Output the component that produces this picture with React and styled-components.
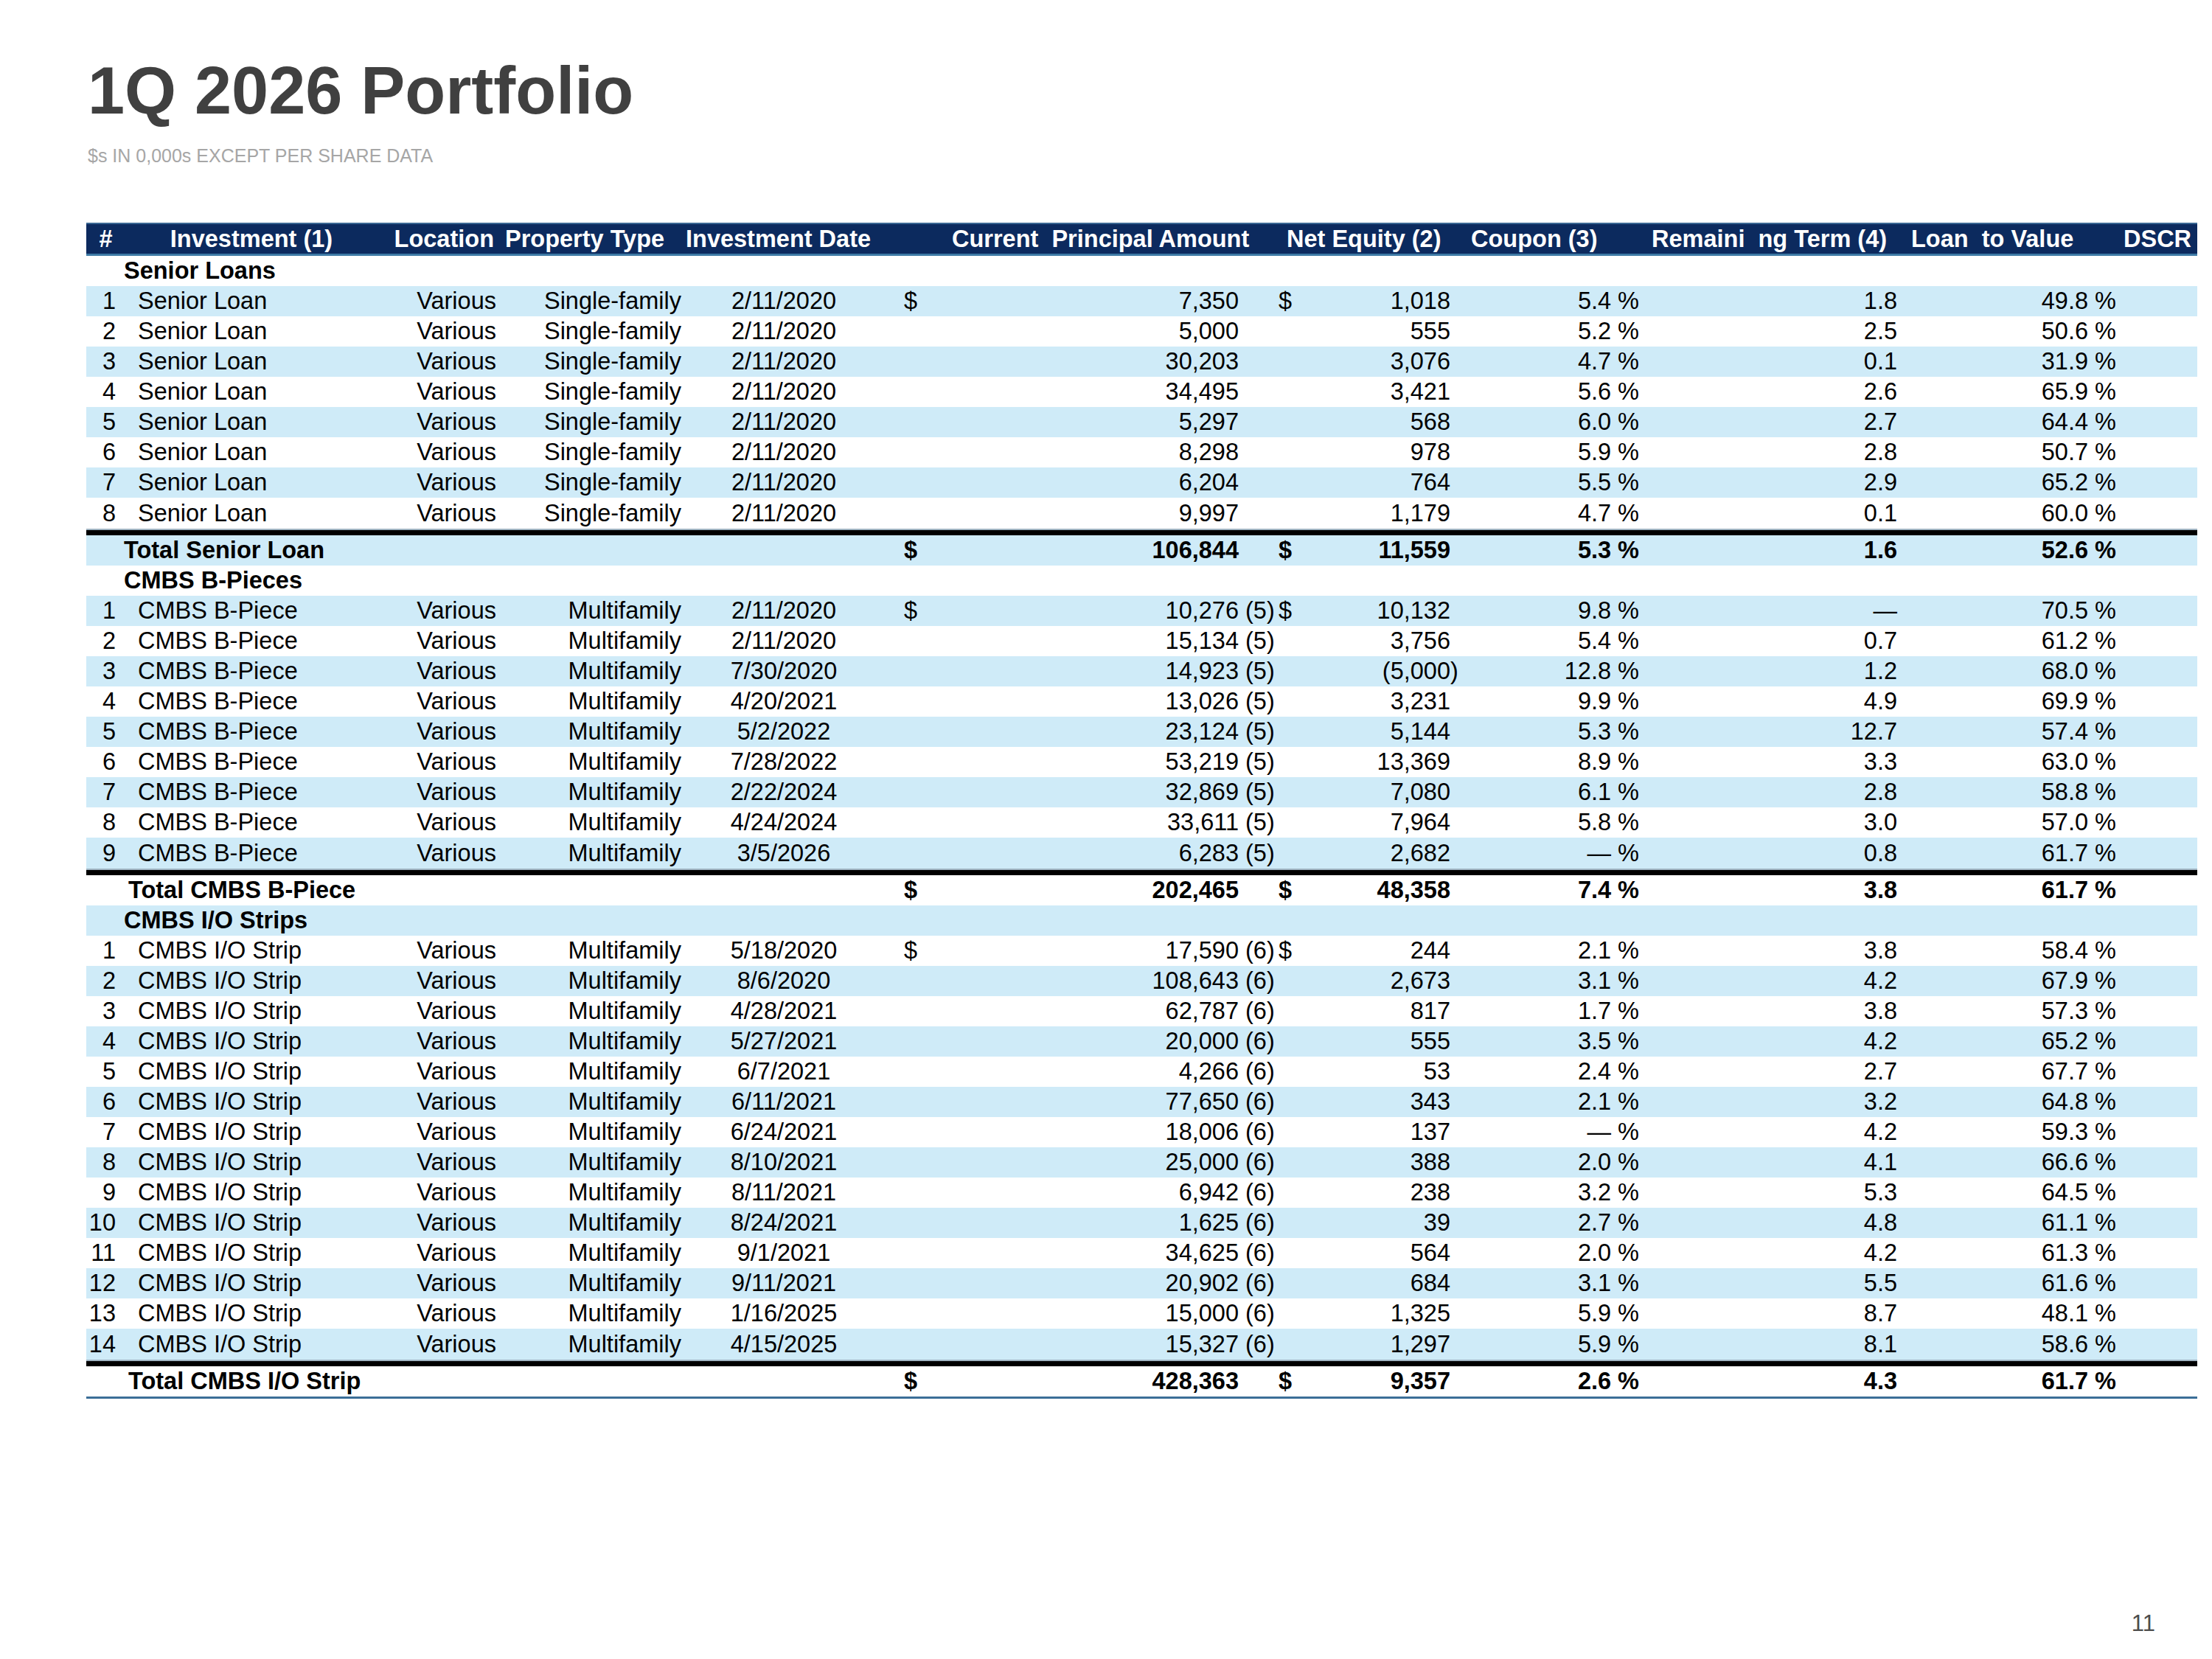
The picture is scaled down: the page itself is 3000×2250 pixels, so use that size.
import React from 'react';
import styled, { createGlobalStyle } from 'styled-components';

const GlobalStyle = createGlobalStyle`
  html, body {
    margin: 0;
    padding: 0;
    background: #fff;
  }
  body {
    font-family: "Liberation Sans", Arial, sans-serif;
    color: #000;
  }
`;

// column grid shared by header and body rows
const COLS = '53px 350px 160px 250px 260px 540px 265px 240px 350px 295px 100px';

const Page = styled.div`
  width: 3000px;
  height: 2250px;
  box-sizing: border-box;
  padding: 78px 20px 0 117px;
  display: flex;
  flex-direction: column;
`;

const Title = styled.h1`
  margin: 0 0 0 2px;
  font-size: 90px;
  line-height: 90px;
  font-weight: 700;
  color: #404040;
`;

const Subtitle = styled.div`
  margin: 31px 0 0 2px;
  font-size: 25px;
  line-height: 25px;
  color: #a6a6a6;
`;

const Table = styled.div`
  margin-top: 78px;
  width: 2863px;
  border-bottom: 3px solid #3b6e97;
`;

const HeadRow = styled.div`
  display: grid;
  grid-template-columns: ${COLS};
  align-items: center;
  height: 45px;
  box-sizing: border-box;
  background: #0c2a5e;
  border-top: 2px solid #3a6894;
  border-bottom: 3px solid #3d7aa5;
  color: #fff;
  font-size: 32.5px;
  font-weight: 700;
`;

const HeadCell = styled.div`
  white-space: pre;
  text-align: ${(p) => p.$align || 'left'};
  padding-left: ${(p) => p.$pl || 0}px;
  padding-right: ${(p) => p.$pr || 0}px;
`;

const Row = styled.div`
  display: grid;
  grid-template-columns: ${COLS};
  align-items: center;
  box-sizing: border-box;
  height: ${(p) => p.$h}px;
  background: ${(p) => (p.$stripe ? '#cfebf8' : '#fff')};
  font-size: 32.5px;
  font-weight: ${(p) => (p.$bold ? 700 : 400)};
  border-top: ${(p) => (p.$rule ? '7px solid #000' : 'none')};
  border-bottom: ${(p) => (p.$last ? '2px solid #9fb3c1' : 'none')};
`;

const Cell = styled.div`
  white-space: pre;
  text-align: ${(p) => p.$align || 'left'};
  padding-left: ${(p) => p.$pl || 0}px;
  padding-right: ${(p) => p.$pr || 0}px;
`;

const Label = styled.div`
  grid-column: 1 / 3;
  padding-left: ${(p) => p.$indent}px;
  font-weight: 700;
  white-space: pre;
`;

const Money = styled.div`
  display: flex;
  justify-content: space-between;
  white-space: pre;
  padding-left: ${(p) => p.$pl}px;
  padding-right: ${(p) => p.$pr}px;
`;

const Note = styled.span`
  display: inline-block;
  width: 50px;
`;

const Paren = styled.span`
  display: inline-block;
  width: 11px;
`;

const PageNum = styled.div`
  margin-top: auto;
  margin-right: 57px;
  margin-bottom: 30px;
  align-self: flex-end;
  font-size: 31px;
  color: #4d4d4d;
`;

const headers = [
  { text: '#', align: 'center' },
  { text: 'Investment (1)', align: 'center', pr: 8 },
  { text: 'Location', align: 'right', pr: 10 },
  { text: 'Property Type', pl: 5 },
  { text: 'Investment Date', align: 'center', pr: 10 },
  { text: 'Current  Principal Amount', pl: 101 },
  { text: 'Net Equity (2)', pl: 15 },
  { text: 'Coupon (3)', pl: 0 },
  { text: 'Remaini  ng Term (4)', pl: 5 },
  { text: 'Loan  to Value', pl: 7 },
  { text: 'DSCR', align: 'right', pr: 11 },
];

const sections = [
  {
    label: 'Senior Loans',
    name: 'Senior Loan',
    type: 'Single-family',
    note: '',
    totalLabel: 'Total Senior Loan',
    totalIndent: 51,
    rows: [
      ['2/11/2020', '7,350', '1,018', '5.4', '1.8', '49.8'],
      ['2/11/2020', '5,000', '555', '5.2', '2.5', '50.6'],
      ['2/11/2020', '30,203', '3,076', '4.7', '0.1', '31.9'],
      ['2/11/2020', '34,495', '3,421', '5.6', '2.6', '65.9'],
      ['2/11/2020', '5,297', '568', '6.0', '2.7', '64.4'],
      ['2/11/2020', '8,298', '978', '5.9', '2.8', '50.7'],
      ['2/11/2020', '6,204', '764', '5.5', '2.9', '65.2'],
      ['2/11/2020', '9,997', '1,179', '4.7', '0.1', '60.0'],
    ],
    total: ['106,844', '11,559', '5.3', '1.6', '52.6'],
  },
  {
    label: 'CMBS B-Pieces',
    name: 'CMBS B-Piece',
    type: 'Multifamily',
    note: ' (5)',
    totalLabel: 'Total CMBS B-Piece',
    totalIndent: 57,
    rows: [
      ['2/11/2020', '10,276', '10,132', '9.8', '—', '70.5'],
      ['2/11/2020', '15,134', '3,756', '5.4', '0.7', '61.2'],
      ['7/30/2020', '14,923', '-5,000', '12.8', '1.2', '68.0'],
      ['4/20/2021', '13,026', '3,231', '9.9', '4.9', '69.9'],
      ['5/2/2022', '23,124', '5,144', '5.3', '12.7', '57.4'],
      ['7/28/2022', '53,219', '13,369', '8.9', '3.3', '63.0'],
      ['2/22/2024', '32,869', '7,080', '6.1', '2.8', '58.8'],
      ['4/24/2024', '33,611', '7,964', '5.8', '3.0', '57.0'],
      ['3/5/2026', '6,283', '2,682', '—', '0.8', '61.7'],
    ],
    total: ['202,465', '48,358', '7.4', '3.8', '61.7'],
  },
  {
    label: 'CMBS I/O Strips',
    name: 'CMBS I/O Strip',
    type: 'Multifamily',
    note: ' (6)',
    totalLabel: 'Total CMBS I/O Strip',
    totalIndent: 57,
    rows: [
      ['5/18/2020', '17,590', '244', '2.1', '3.8', '58.4'],
      ['8/6/2020', '108,643', '2,673', '3.1', '4.2', '67.9'],
      ['4/28/2021', '62,787', '817', '1.7', '3.8', '57.3'],
      ['5/27/2021', '20,000', '555', '3.5', '4.2', '65.2'],
      ['6/7/2021', '4,266', '53', '2.4', '2.7', '67.7'],
      ['6/11/2021', '77,650', '343', '2.1', '3.2', '64.8'],
      ['6/24/2021', '18,006', '137', '—', '4.2', '59.3'],
      ['8/10/2021', '25,000', '388', '2.0', '4.1', '66.6'],
      ['8/11/2021', '6,942', '238', '3.2', '5.3', '64.5'],
      ['8/24/2021', '1,625', '39', '2.7', '4.8', '61.1'],
      ['9/1/2021', '34,625', '564', '2.0', '4.2', '61.3'],
      ['9/11/2021', '20,902', '684', '3.1', '5.5', '61.6'],
      ['1/16/2025', '15,000', '1,325', '5.9', '8.7', '48.1'],
      ['4/15/2025', '15,327', '1,297', '5.9', '8.1', '58.6'],
    ],
    total: ['428,363', '9,357', '2.6', '4.3', '61.7'],
  },
];

const Equity = ({ value }) => {
  const neg = value.startsWith('-');
  return (
    <span>
      {neg ? `(${value.slice(1)}` : value}
      <Paren>{neg ? ')' : ''}</Paren>
    </span>
  );
};

const Figures = ({ principal, note, equity, coupon, term, ltv, dollar }) => (
  <>
    <Money $pl={36} $pr={0}>
      <span>{dollar ? '$' : ''}</span>
      <span>
        {principal}
        <Note>{note}</Note>
      </span>
    </Money>
    <Money $pl={4} $pr={17}>
      <span>{dollar ? '$' : ''}</span>
      <Equity value={equity} />
    </Money>
    <Cell $align="right" $pr={12}>{coupon} %</Cell>
    <Cell $align="right" $pr={12}>{term}</Cell>
    <Cell $align="right" $pr={10}>{ltv} %</Cell>
    <Cell />
  </>
);

const buildRows = () => {
  const out = [];
  sections.forEach((s) => {
    out.push({ kind: 'label', s });
    s.rows.forEach((r, i) => {
      out.push({ kind: 'item', s, r, n: i + 1, first: i === 0, last: i === s.rows.length - 1 });
    });
    out.push({ kind: 'total', s });
  });
  return out;
};

const App = () => {
  const rows = buildRows();

  return (
    <Page>
      <GlobalStyle />
      <Title>1Q 2026 Portfolio</Title>
      <Subtitle>$s IN 0,000s EXCEPT PER SHARE DATA</Subtitle>

      <Table>
        <HeadRow>
          {headers.map((h) => (
            <HeadCell key={h.text} $align={h.align} $pl={h.pl} $pr={h.pr}>
              {h.text}
            </HeadCell>
          ))}
        </HeadRow>

        {rows.map((row, i) => {
          const stripe = i % 2 === 1;
          if (row.kind === 'label') {
            return (
              <Row key={i} $h={41} $stripe={stripe}>
                <Label $indent={51}>{row.s.label}</Label>
              </Row>
            );
          }
          if (row.kind === 'total') {
            const [principal, equity, coupon, term, ltv] = row.s.total;
            return (
              <Row key={i} $h={48} $stripe={stripe} $bold $rule>
                <Label $indent={row.s.totalIndent}>{row.s.totalLabel}</Label>
                <Cell />
                <Cell />
                <Cell />
                <Figures
                  dollar
                  principal={principal}
                  note=""
                  equity={equity}
                  coupon={coupon}
                  term={term}
                  ltv={ltv}
                />
              </Row>
            );
          }
          const [date, principal, equity, coupon, term, ltv] = row.r;
          return (
            <Row key={i} $h={row.last ? 44 : 41} $stripe={stripe} $last={row.last}>
              <Cell $align="right" $pr={13}>{row.n}</Cell>
              <Cell $pl={17}>{row.s.name}</Cell>
              <Cell $align="right" $pr={7}>Various</Cell>
              <Cell $align="right" $pr={6}>{row.s.type}</Cell>
              <Cell $align="center" $pl={6}>{date}</Cell>
              <Figures
                dollar={row.first}
                principal={principal}
                note={row.s.note}
                equity={equity}
                coupon={coupon}
                term={term}
                ltv={ltv}
              />
            </Row>
          );
        })}
      </Table>

      <PageNum>11</PageNum>
    </Page>
  );
};

export default App;
